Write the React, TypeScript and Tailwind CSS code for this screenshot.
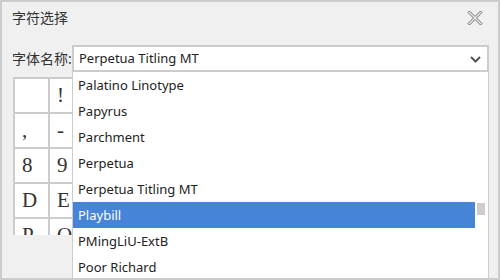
import React from "react";

const fonts = [
  "Palatino Linotype",
  "Papyrus",
  "Parchment",
  "Perpetua",
  "Perpetua Titling MT",
  "Playbill",
  "PMingLiU-ExtB",
  "Poor Richard",
];

const rows = [
  [" ", "!", '"', "#", "$", "%", "&", "'", "(", ")", "*", "+"],
  [",", "-", ".", "/", "0", "1", "2", "3", "4", "5", "6", "7"],
  ["8", "9", ":", ";", "<", "=", ">", "?", "@", "A", "B", "C"],
  ["D", "E", "F", "G", "H", "I", "J", "K", "L", "M", "N", "O"],
  ["P", "Q", "R", "S", "T", "U", "V", "W", "X", "Y", "Z", "["],
];

export default function App() {
  return (
    <div
      className="relative h-[280px] w-[500px] overflow-hidden border-2 border-[#cccccc] bg-[#f0f0f0] text-[#333333]"
      style={{ fontFamily: '"Noto Sans", "Noto Sans CJK SC", sans-serif' }}
    >
      {/* title bar */}
      <div className="flex h-[31px] items-center justify-between pl-[10px] pr-[15px]">
        <span className="text-[14px]">字符选择</span>
        <svg width="16" height="16" viewBox="0 0 16 16">
          <polygon
            points="1,2.5 2.5,1 8,6.5 13.5,1 15,2.5 9.5,8 15,13.5 13.5,15 8,9.5 2.5,15 1,13.5 6.5,8"
            fill="none"
            stroke="#6a6a6a"
            strokeWidth="1"
            strokeLinejoin="round"
          />
        </svg>
      </div>

      {/* font name */}
      <div className="mt-[12px] flex h-[27px] items-center">
        <span className="w-[70px] whitespace-nowrap pl-[10px] text-[14px]">字体名称:</span>
        <div className="flex h-[27px] w-[417px] items-center justify-between border-2 border-[#cccccc] bg-white pl-[5px] pr-[6px] pt-[1px] text-[13px] text-[#222222]">
          <span>Perpetua Titling MT</span>
          <svg width="11" height="7" viewBox="0 0 11 7">
            <polyline
              points="1,1 5.5,5.5 10,1"
              fill="none"
              stroke="#555555"
              strokeWidth="2"
            />
          </svg>
        </div>
      </div>

      {/* character grid */}
      <div className="ml-[11px] mt-[5px] h-[158px] w-[422px] overflow-hidden">
        <div className="border-l-2 border-t-2 border-[#cccccc]">
          {rows.map((row, i) => (
            <div key={i} className="flex">
              {row.map((ch, j) => (
                <div
                  key={j}
                  className="flex h-[35px] w-[35px] items-center border-b-2 border-r-2 border-[#cccccc] bg-white pl-[7px] text-[21px] text-[#333333]"
                  style={{ fontFamily: '"Liberation Serif", serif' }}
                >
                  {ch}
                </div>
              ))}
            </div>
          ))}
        </div>
      </div>

      {/* dropdown list */}
      <div className="absolute left-[70px] top-[70px] h-[220px] w-[417px] border-x border-[#cccccc] bg-white">
        <div className="flex">
          <div className="w-[402px]">
            {fonts.map((f) => (
              <div
                key={f}
                className={
                  f === "Playbill"
                    ? "flex h-[26px] items-center bg-[#4684d7] pl-[5px] pt-[1px] text-[13px] text-white"
                    : "flex h-[26px] items-center pl-[5px] pt-[1px] text-[13px] text-[#222222]"
                }
              >
                {f}
              </div>
            ))}
          </div>
          <div className="flex-1 pl-[2px] pt-[131px]">
            <div className="h-[12px] w-[8px] bg-[#cdcdcd]" />
          </div>
        </div>
      </div>
    </div>
  );
}
